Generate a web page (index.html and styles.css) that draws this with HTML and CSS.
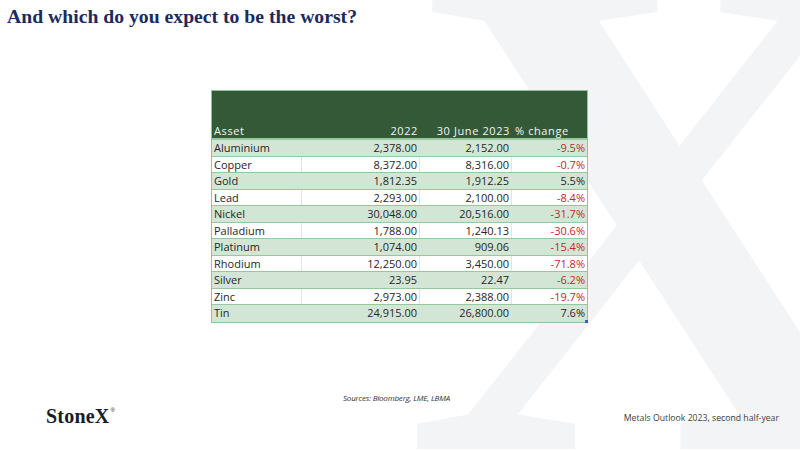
FILE: index.html
```html
<!DOCTYPE html>
<html lang="en">
<head>
<meta charset="utf-8">
<title>And which do you expect to be the worst?</title>
<link rel="stylesheet" href="styles.css">
</head>
<body>
<div class="slide">
  <div class="bg-x" aria-hidden="true">X</div>
  <h1 class="title">And which do you expect to be the worst?</h1>
  <div class="table-wrap">
    <div class="tbl">
      <div class="row head">
        <div class="c left">Asset</div>
        <div class="c num">2022</div>
        <div class="c num">30 June 2023</div>
        <div class="c left pct-h">% change</div>
      </div>
      <div class="row g"><div class="c left">Aluminium</div><div class="c num">2,378.00</div><div class="c num">2,152.00</div><div class="c num neg">-9.5%</div></div>
      <div class="row w"><div class="c left">Copper</div><div class="c num">8,372.00</div><div class="c num">8,316.00</div><div class="c num neg">-0.7%</div></div>
      <div class="row g"><div class="c left">Gold</div><div class="c num">1,812.35</div><div class="c num">1,912.25</div><div class="c num">5.5%</div></div>
      <div class="row w"><div class="c left">Lead</div><div class="c num">2,293.00</div><div class="c num">2,100.00</div><div class="c num neg">-8.4%</div></div>
      <div class="row g"><div class="c left">Nickel</div><div class="c num">30,048.00</div><div class="c num">20,516.00</div><div class="c num neg">-31.7%</div></div>
      <div class="row w"><div class="c left">Palladium</div><div class="c num">1,788.00</div><div class="c num">1,240.13</div><div class="c num neg">-30.6%</div></div>
      <div class="row g"><div class="c left">Platinum</div><div class="c num">1,074.00</div><div class="c num">909.06</div><div class="c num neg">-15.4%</div></div>
      <div class="row w"><div class="c left">Rhodium</div><div class="c num">12,250.00</div><div class="c num">3,450.00</div><div class="c num neg">-71.8%</div></div>
      <div class="row g"><div class="c left">Silver</div><div class="c num">23.95</div><div class="c num">22.47</div><div class="c num neg">-6.2%</div></div>
      <div class="row w"><div class="c left">Zinc</div><div class="c num">2,973.00</div><div class="c num">2,388.00</div><div class="c num neg">-19.7%</div></div>
      <div class="row g last"><div class="c left">Tin</div><div class="c num">24,915.00</div><div class="c num">26,800.00</div><div class="c num">7.6%</div></div>
    </div>
    <span class="handle" aria-hidden="true"></span>
  </div>
  <p class="sources">Sources: Bloomberg, LME, LBMA</p>
  <div class="footer">
    <div class="logo">StoneX<span class="reg">®</span></div>
    <div class="footnote">Metals Outlook 2023, second half-year</div>
  </div>
</div>
</body>
</html>
```

FILE: styles.css
```css
html, body {
  margin: 0;
  padding: 0;
  background: #ffffff;
}

.slide {
  position: relative;
  width: 800px;
  height: 450px;
  overflow: hidden;
  display: flex;
  flex-direction: column;
  font-family: "Open Sans", "Liberation Sans", sans-serif;
}

.bg-x {
  position: absolute;
  left: 404px;
  top: -142px;
  font-family: "Liberation Serif", serif;
  font-weight: bold;
  font-size: 706px;
  line-height: 1;
  color: #f3f4f6;
  z-index: 0;
  pointer-events: none;
}

.title {
  position: relative;
  z-index: 1;
  margin: 0;
  padding: 5px 0 0 7px;
  font-family: "Liberation Serif", serif;
  font-weight: bold;
  font-size: 19.7px;
  line-height: 23px;
  color: #1b2b5e;
}

.table-wrap {
  position: relative;
  z-index: 1;
  margin: 62px 0 0 211px;
  width: 377px;
}

.tbl {
  border: 1px solid #8fc697;
  box-sizing: border-box;
  width: 377px;
}

.row {
  display: grid;
  grid-template-columns: 89px 118px 92px 76px;
  height: 16.55px;
  box-sizing: border-box;
  border-bottom: 1px solid #93c99c;
  font-size: 11px;
  line-height: 15px;
  color: #262626;
}

.row.last {
  border-bottom: none;
}

.row.head {
  height: 49px;
  background: #335937;
  color: #f4f4f4;
  align-items: end;
  border-bottom: 2px solid #93c99c;
  letter-spacing: 0.6px;
}

.row.g {
  background: #d3e6d6;
}

.row.w {
  background: #ffffff;
}

.row.w .c + .c {
  border-left: 1px solid #e4e4e4;
}

.c {
  padding: 0 2px;
  white-space: nowrap;
  overflow: hidden;
}

.c.left {
  text-align: left;
}

.c.num {
  text-align: right;
}

.row.head .c {
  padding-bottom: 0;
}

.row.head .num {
  padding-right: 1px;
}

.row.head .pct-h {
  padding-left: 4px;
}

.neg {
  color: #c0272d;
}

.handle {
  position: absolute;
  right: 0;
  bottom: 0;
  width: 3px;
  height: 3px;
  background: #3a5fbf;
}

.sources {
  position: relative;
  z-index: 1;
  margin: 70px 0 0 0;
  padding-left: 343px;
  font-style: italic;
  font-size: 8px;
  line-height: 10px;
  color: #333333;
  letter-spacing: -0.2px;
}

.footer {
  position: relative;
  z-index: 1;
  display: flex;
  justify-content: space-between;
  align-items: center;
  margin-top: 1px;
  padding: 0 21px 0 46px;
}

.logo {
  font-family: "Liberation Serif", serif;
  font-weight: bold;
  font-size: 20px;
  line-height: 24px;
  color: #1c1c28;
  letter-spacing: 0.2px;
}

.reg {
  font-family: "Liberation Sans", sans-serif;
  font-weight: normal;
  font-size: 6px;
  line-height: 6px;
  vertical-align: top;
  position: relative;
  top: 3px;
  margin-left: 1px;
}

.footnote {
  font-size: 8.7px;
  line-height: 12px;
  color: #404040;
  margin-top: 4px;
}
```
